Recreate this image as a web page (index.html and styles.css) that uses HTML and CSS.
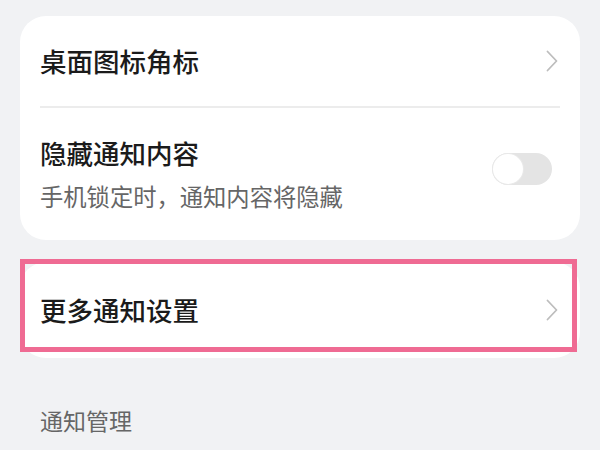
FILE: index.html
```html
<!DOCTYPE html>
<html lang="zh-CN">
<head>
<meta charset="utf-8">
<link rel="stylesheet" href="styles.css">
</head>
<body>
<div class="page">
  <div class="card">
    <div class="row row-link">
      <span class="title">桌面图标角标</span>
      <svg class="chev" width="14" height="24" viewBox="0 0 14 24"><path d="M2.5 2.5 L11.5 12 L2.5 21.5" fill="none" stroke="#bdbdbd" stroke-width="1.8" stroke-linecap="round" stroke-linejoin="round"/></svg>
    </div>
    <div class="divider"></div>
    <div class="row row-toggle">
      <div class="text">
        <div class="title">隐藏通知内容</div>
        <div class="sub">手机锁定时，通知内容将隐藏</div>
      </div>
      <div class="toggle"><div class="knob"></div></div>
    </div>
  </div>
  <div class="card card2">
    <div class="row row-link2">
      <span class="title">更多通知设置</span>
      <svg class="chev" width="14" height="24" viewBox="0 0 14 24"><path d="M2.5 2.5 L11.5 12 L2.5 21.5" fill="none" stroke="#bdbdbd" stroke-width="1.8" stroke-linecap="round" stroke-linejoin="round"/></svg>
    </div>
    <div class="highlight"></div>
  </div>
  <div class="section">通知管理</div>
</div>
</body>
</html>
```
FILE: styles.css
```css
html, body {
  margin: 0;
  padding: 0;
  background: #f1f2f4;
  font-family: "Noto Sans CJK SC", "Noto Sans", sans-serif;
}
.page {
  padding: 16px 20px 0 20px;
}
.card {
  background: #ffffff;
  border-radius: 26px;
  padding: 0 20px;
}
.row {
  display: flex;
  align-items: center;
  justify-content: space-between;
}
.row-link {
  height: 90px;
}
.title {
  font-size: 26.5px;
  line-height: 36px;
  color: #1b1b1b;
  font-weight: 500;
}
.chev {
  display: block;
  margin-right: 1px;
}
.divider {
  height: 2px;
  background: #ececec;
}
.row-toggle {
  padding: 27px 0 27px 0;
}
.sub {
  margin-top: 8px;
  font-size: 23.3px;
  line-height: 34px;
  color: #666666;
}
.toggle {
  width: 60px;
  height: 32px;
  border-radius: 16px;
  background: #e4e4e4;
  margin-right: 8px;
  margin-bottom: 10px;
  display: flex;
  align-items: center;
  padding: 0 1px;
  box-sizing: border-box;
}
.knob {
  width: 30px;
  height: 30px;
  border-radius: 50%;
  background: #ffffff;
  box-shadow: 0 0 0 1px #e9e9e9;
}
.card2 {
  margin-top: 22px;
  position: relative;
}
.row-link2 {
  height: 96px;
}
.highlight {
  position: absolute;
  top: -3px;
  left: 0;
  right: 3px;
  bottom: 6px;
  border: 5px solid #ef6b93;
}
.section {
  margin-top: 46px;
  padding-left: 20px;
  font-size: 23px;
  line-height: 32px;
  color: #666666;
}
```
